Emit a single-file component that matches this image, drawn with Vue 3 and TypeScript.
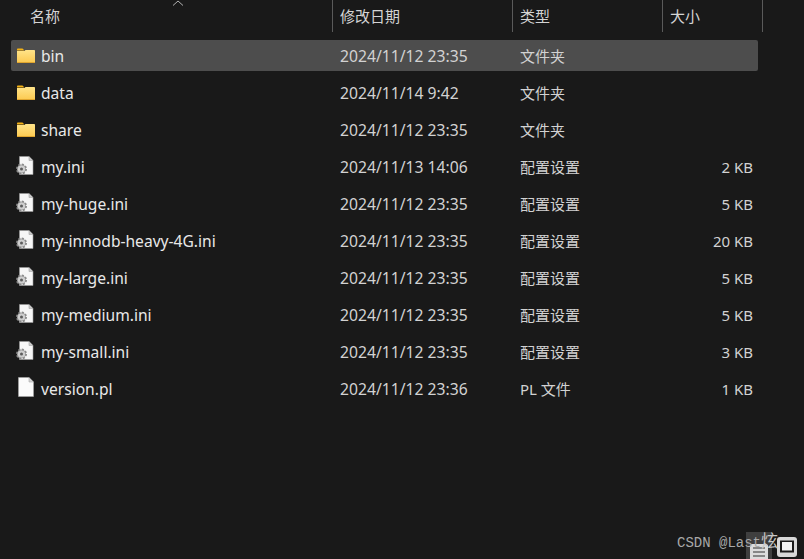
<script setup lang="ts">
interface Item {
  name: string
  date: string
  type: string
  size: string
  kind: 'folder' | 'config' | 'file'
  selected?: boolean
}

const items: Item[] = [
  { name: 'bin', date: '2024/11/12 23:35', type: '文件夹', size: '', kind: 'folder', selected: true },
  { name: 'data', date: '2024/11/14 9:42', type: '文件夹', size: '', kind: 'folder' },
  { name: 'share', date: '2024/11/12 23:35', type: '文件夹', size: '', kind: 'folder' },
  { name: 'my.ini', date: '2024/11/13 14:06', type: '配置设置', size: '2 KB', kind: 'config' },
  { name: 'my-huge.ini', date: '2024/11/12 23:35', type: '配置设置', size: '5 KB', kind: 'config' },
  { name: 'my-innodb-heavy-4G.ini', date: '2024/11/12 23:35', type: '配置设置', size: '20 KB', kind: 'config' },
  { name: 'my-large.ini', date: '2024/11/12 23:35', type: '配置设置', size: '5 KB', kind: 'config' },
  { name: 'my-medium.ini', date: '2024/11/12 23:35', type: '配置设置', size: '5 KB', kind: 'config' },
  { name: 'my-small.ini', date: '2024/11/12 23:35', type: '配置设置', size: '3 KB', kind: 'config' },
  { name: 'version.pl', date: '2024/11/12 23:36', type: 'PL 文件', size: '1 KB', kind: 'file' },
]
</script>

<template>
  <div class="page">
    <div class="header">
      <div class="hcol c-name">名称
        <svg class="sort" width="12" height="6" viewBox="0 0 12 6"><path d="M1 5.500 6 1l5 4.500" fill="none" stroke="#b0b0b0" stroke-width="1"/></svg>
      </div>
      <div class="hcol c-date">修改日期</div>
      <div class="hcol c-type">类型</div>
      <div class="hcol c-size">大小</div>
    </div>
    <div class="rows">
      <div v-for="it in items" :key="it.name" class="row" :class="{ selected: it.selected }">
        <div class="cell name">
          <svg v-if="it.kind === 'folder'" class="icon" width="20" height="20" viewBox="0 0 20 20">
            <defs>
              <linearGradient id="fold" x1="0" y1="0" x2="0" y2="1">
                <stop offset="0" stop-color="#ffe48a"/>
                <stop offset="1" stop-color="#fcc94f"/>
              </linearGradient>
            </defs>
            <path d="M1 3.500C1 3 1.400 2.500 2 2.500h4.500L8.500 4.500H1Z" fill="#f5b316"/>
            <path d="M1 5h7.500L9.500 4H18c.6 0 1 .4 1 1v11c0 .6-.4 1-1 1H2c-.6 0-1-.4-1-1Z" fill="url(#fold)"/>
            <path d="M1 16h18c0 .6-.4 1-1 1H2c-.6 0-1-.4-1-1Z" fill="#e0a52e"/>
          </svg>
          <svg v-else-if="it.kind === 'config'" class="icon" width="20" height="20" viewBox="0 0 20 20">
            <path d="M3.500-.5H13l4 4v14H3.500Z" fill="#f6f6f6" stroke="#9a9a9a" stroke-width=".6"/>
            <path d="M13-.5v4h4" fill="#c9c9c9" stroke="#a5a5a5" stroke-width=".6"/>
            <circle cx="5.500" cy="12" r="4.500" fill="#a8a8a8" stroke="#8c8c8c" stroke-width="2" stroke-dasharray="2 1.500"/>
            <circle cx="5.500" cy="12" r="3.600" fill="#cfcfcf"/>
            <circle cx="5.500" cy="12" r="1.500" fill="#5c5c5c"/>
          </svg>
          <svg v-else class="icon" width="20" height="20" viewBox="0 0 20 20">
            <path d="M2.500-1.500H13l4.500 4.500v14.500h-15Z" fill="#fbfbfb" stroke="#a8a8a8" stroke-width=".6"/>
            <path d="M13-1.500V3h4.500" fill="#d4d4d4" stroke="#a8a8a8" stroke-width=".6"/>
          </svg>
          <span class="label">{{ it.name }}</span>
        </div>
        <div class="cell date">{{ it.date }}</div>
        <div class="cell type">{{ it.type }}</div>
        <div class="cell size">{{ it.size }}</div>
      </div>
    </div>

    <div class="tool tool-list">
      <svg width="26" height="27" viewBox="0 0 26 27">
        <path d="M4 27V14c0-1 .6-2 2-2h14c1.400 0 2 1 2 2v13Z" fill="#dcdcdc"/>
        <path d="M7 16h12M7 20h12M7 24h12" stroke="#333" stroke-width="1.200"/>
      </svg>
    </div>
    <div class="tool tool-win">
      <svg width="20" height="20" viewBox="0 0 20 20">
        <rect width="20" height="20" rx="3" fill="#d8d8d8"/>
        <rect x="3" y="3.500" width="14" height="12" fill="#1a1a1a"/>
        <rect x="5" y="5" width="10" height="8.500" fill="#f2f2f2"/>
      </svg>
    </div>
    <div class="watermark">CSDN @Last<span class="wm-cjk">炫</span></div>
  </div>
</template>

<style scoped>
.page {
  position: relative;
  width: 804px;
  height: 559px;
  overflow: hidden;
  background: #191919;
  color: #e6e6e6;
  font-family: "Noto Sans", "Noto Sans CJK SC", sans-serif;
  font-size: 15.6px;
}
.header {
  display: flex;
  height: 32px;
  margin-bottom: 8px;
}
.hcol {
  position: relative;
  box-sizing: border-box;
  padding-left: 7px;
  line-height: 32px;
  border-right: 1px solid #5a5a5a;
  color: #d4d4d4;
  font-size: 15px;
}
.c-name { width: 333px; padding-left: 30px; }
.c-date { width: 180px; }
.c-type { width: 150px; }
.c-size { width: 100px; }
.sort { position: absolute; left: 172px; top: 0; }
.rows {
  display: flex;
  flex-direction: column;
  gap: 6px;
  width: 747px;
  margin-left: 11px;
}
.row {
  display: flex;
  align-items: flex-start;
  height: 31px;
  border-radius: 2px;
}
.row.selected { background: #4d4d4d; }
.cell { line-height: 33px; white-space: nowrap; }
.name {
  display: flex;
  align-items: center;
  width: 329px;
  padding-left: 5px;
  box-sizing: border-box;
}
.icon { flex: none; margin: -2px 5px 0 0; overflow: visible; }
.label { color: #e8e8e8; }
.date { width: 180px; color: #d2d2d2; font-size: 15.7px; }
.type { width: 150px; color: #d2d2d2; font-size: 15px; }
.size { width: 83px; text-align: right; color: #d2d2d2; font-size: 15px; }
.watermark {
  position: absolute;
  left: 677px;
  top: 533px;
  color: #a8a8a8;
  font-family: "Liberation Mono", "Noto Sans CJK SC", monospace;
  font-size: 14px;
  line-height: 20px;
  white-space: nowrap;
}
.wm-cjk { font-size: 17px; color: #c8c8c8; }
.tool { position: absolute; line-height: 0; }
.tool-list { left: 746px; top: 532px; width: 26px; height: 27px; background: rgba(120,120,120,.4); }
.tool-win { left: 777px; top: 537px; }
</style>
